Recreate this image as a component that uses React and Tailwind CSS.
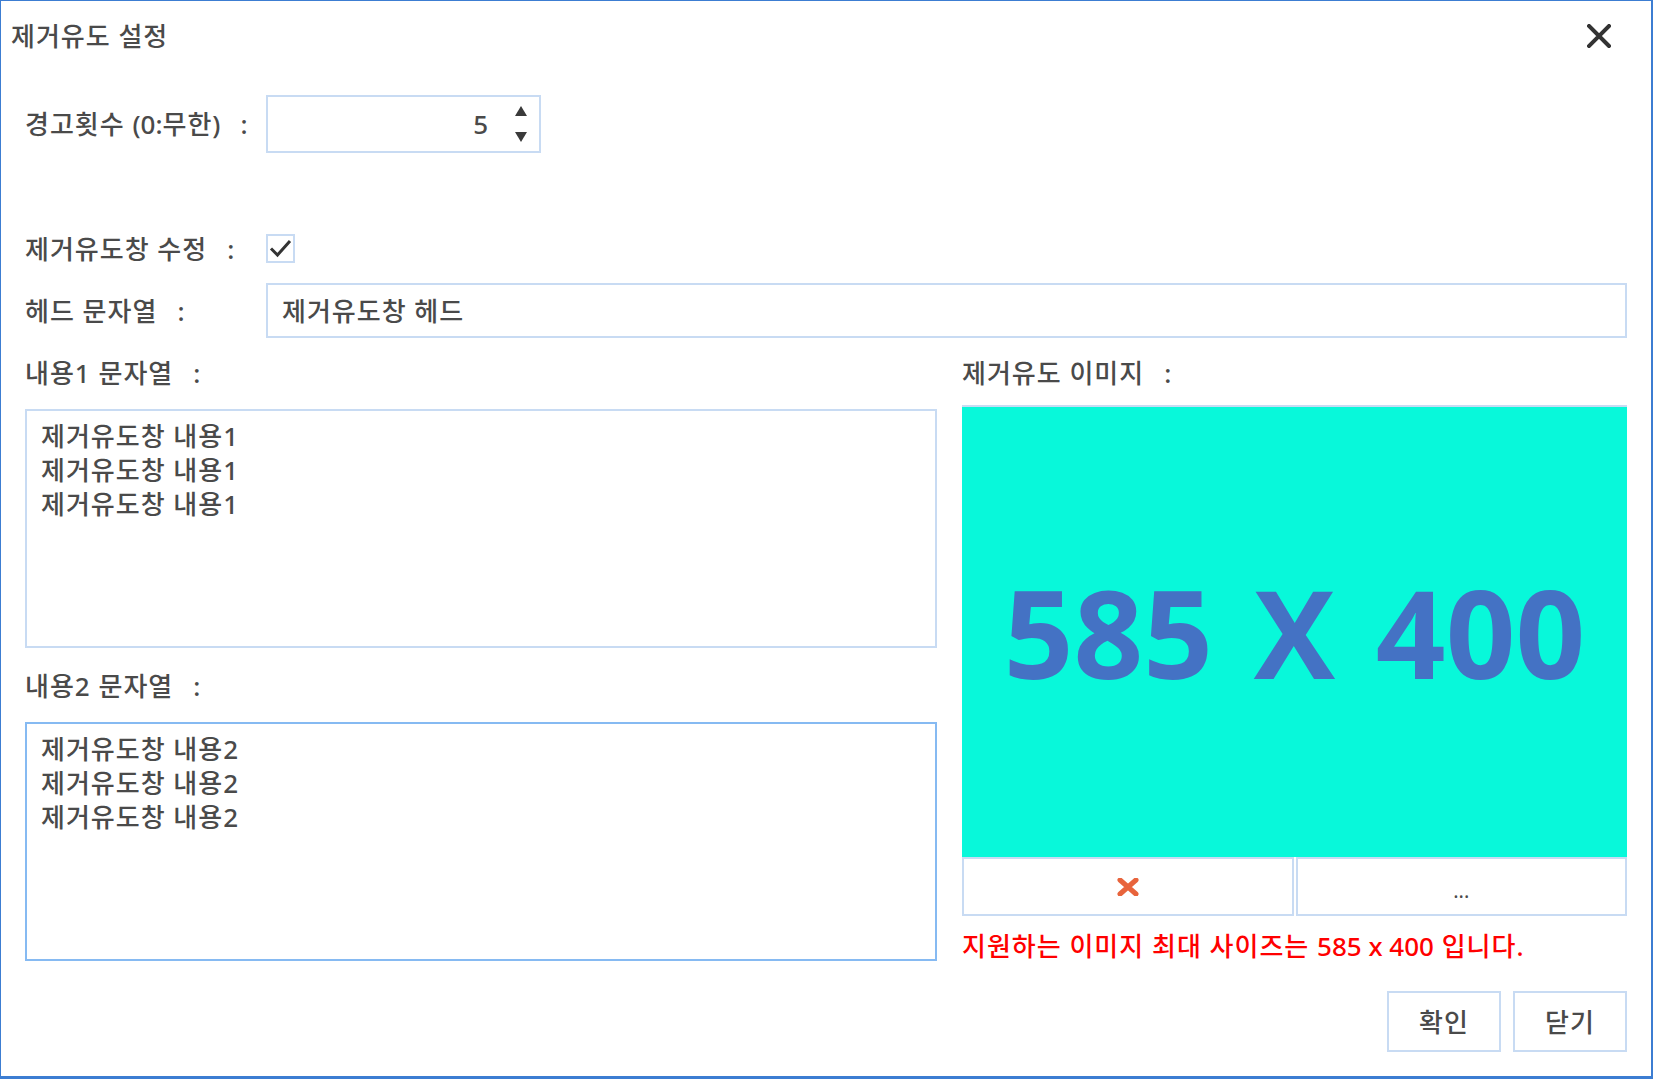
import React from "react";

const FONT = { fontFamily: '"Noto Sans", "Noto Sans CJK KR", sans-serif' };
const TXT = "text-[26px] leading-[34px] tracking-[1px] font-medium";

function Label({ text, className = "" }) {
  return (
    <div className={"flex items-center text-[#4a4a4a] whitespace-nowrap " + TXT + " " + className}>
      <span>{text}</span>
      <span className="ml-[20px]">:</span>
    </div>
  );
}

export default function App() {
  return (
    <div
      className="w-[1653px] h-[1079px] bg-white border-[#3c7dd2] border-t border-l border-r-2 border-b-[3px] flex flex-col overflow-hidden"
      style={FONT}
    >
      {/* Title bar */}
      <div className="h-[70px] flex items-center justify-between pl-[10px] pr-[40px] shrink-0">
        <div className={"text-[#4a4a4a] " + TXT}>제거유도 설정</div>
        <svg width="24" height="24" viewBox="0 0 24 24" className="block">
          <path d="M2 2 L22 22 M22 2 L2 22" stroke="#333" strokeWidth="4" strokeLinecap="square" />
        </svg>
      </div>

      <div className="flex flex-col pl-[24px] pr-[24px]">
        {/* Spin row */}
        <div className="flex items-center mt-[24px] h-[58px]">
          <Label
            text={
              <>
                경고횟수 <span className="tracking-normal">(0:</span>무한<span className="tracking-normal">)</span>
              </>
            }
            className="w-[241px]"
          />
          <div className="w-[275px] h-[58px] border-2 border-[#c8dbf3] flex items-center justify-end pr-[12px]">
            <span className={"text-[#4a4a4a] mr-[26px] " + TXT}>5</span>
            <div className="flex flex-col items-center gap-[16px]">
              <svg width="12" height="10" viewBox="0 0 12 10"><path d="M6 0 L12 10 L0 10 Z" fill="#3a3a3a" /></svg>
              <svg width="12" height="10" viewBox="0 0 12 10"><path d="M0 0 L12 0 L6 10 Z" fill="#3a3a3a" /></svg>
            </div>
          </div>
        </div>

        {/* Checkbox row */}
        <div className="flex items-center mt-[81px] h-[29px]">
          <Label text="제거유도창 수정" className="w-[241px]" />
          <div className="w-[29px] h-[29px] border-2 border-[#c8dbf3] flex items-center justify-center">
            <svg width="25" height="25" viewBox="0 0 25 25">
              <path d="M3 12.5 L9.5 19 L22 5" fill="none" stroke="#333" strokeWidth="3" />
            </svg>
          </div>
        </div>

        {/* Head row */}
        <div className="flex items-center mt-[20px] h-[55px]">
          <Label text="헤드 문자열" className="w-[241px]" />
          <div className="flex-1 h-[55px] border-2 border-[#c8dbf3] flex items-center pl-[14px]">
            <span className={"text-[#4a4a4a] " + TXT}>제거유도창 헤드</span>
          </div>
        </div>

        {/* Two columns */}
        <div className="flex gap-[25px]">
          {/* Left column */}
          <div className="w-[912px] flex flex-col">
            <Label text="내용1 문자열" className="mt-[15px] h-[40px]" />
            <div className={"mt-[16px] h-[239px] border-2 border-[#c8dbf3] pt-[8px] pl-[14px] text-[#4a4a4a] " + TXT}>
              <div>제거유도창 내용1</div>
              <div>제거유도창 내용1</div>
              <div>제거유도창 내용1</div>
            </div>
            <Label text="내용2 문자열" className="mt-[18px] h-[40px]" />
            <div className={"mt-[16px] h-[239px] border-2 border-[#86baf2] pt-[8px] pl-[14px] text-[#4a4a4a] " + TXT}>
              <div>제거유도창 내용2</div>
              <div>제거유도창 내용2</div>
              <div>제거유도창 내용2</div>
            </div>
          </div>

          {/* Right column */}
          <div className="w-[665px] flex flex-col">
            <Label text="제거유도 이미지" className="mt-[15px] h-[40px]" />
            <div className="mt-[12px] h-[452px] border-t-2 border-[#c8dbf3] bg-[#08f8da] flex items-center justify-center">
              <span
                className="text-[122px] leading-none font-bold text-[#4472c4] whitespace-pre"
                style={{ fontFamily: '"Open Sans", sans-serif', wordSpacing: "9px" }}
              >
                585 X 400
              </span>
            </div>
            <div className="h-[59px] flex gap-[2px]">
              <div className="flex-1 border-2 border-[#c8dbf3] flex items-center justify-center">
                <svg width="22" height="18" viewBox="0 0 22 18">
                  <path d="M3 2 L19 16 M19 2 L3 16" stroke="#e8643c" strokeWidth="5" strokeLinecap="round" />
                </svg>
              </div>
              <div className="flex-1 border-2 border-[#c8dbf3] flex items-center justify-center">
                <span className="text-[20px] leading-none text-[#4a4a4a] mt-[8px]">...</span>
              </div>
            </div>
            <div className={"mt-[13px] text-[#ff0000] whitespace-nowrap " + TXT}>
              지원하는 이미지 최대 사이즈는 <span className="tracking-normal">585 x 400</span> 입니다.
            </div>
            <div className="mt-[28px] flex justify-end gap-[12px]">
              <div className={"w-[114px] h-[61px] border-2 border-[#c8dbf3] flex items-center justify-center text-[#4a4a4a] " + TXT}>
                확인
              </div>
              <div className={"w-[114px] h-[61px] border-2 border-[#c8dbf3] flex items-center justify-center text-[#4a4a4a] " + TXT}>
                닫기
              </div>
            </div>
          </div>
        </div>
      </div>
    </div>
  );
}
